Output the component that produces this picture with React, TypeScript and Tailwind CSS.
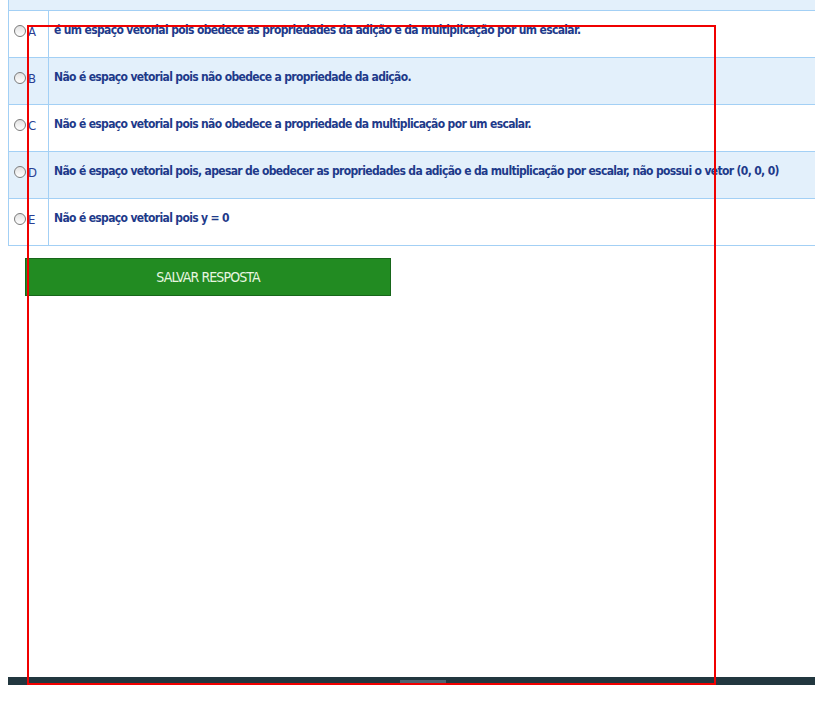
import React from 'react'

const options = [
  { letter: 'A', text: 'é um espaço vetorial pois obedece as propriedades da adição e da multiplicação por um escalar.' },
  { letter: 'B', text: 'Não é espaço vetorial pois não obedece a propriedade da adição.' },
  { letter: 'C', text: 'Não é espaço vetorial pois não obedece a propriedade da multiplicação por um escalar.' },
  { letter: 'D', text: 'Não é espaço vetorial pois, apesar de obedecer as propriedades da adição e da multiplicação por escalar, não possui o vetor (0, 0, 0)' },
  { letter: 'E', text: 'Não é espaço vetorial pois y = 0' },
]

const font = "font-['DejaVu_Sans_Condensed','DejaVu_Sans',sans-serif]"

export default function App() {
  return (
    <div className={`relative h-[710px] w-full overflow-hidden bg-white flex flex-col ${font}`}>
      <div className="ml-2 border-l border-[#a3d0f5]">
        <div className="h-[11px] bg-[#e3f0fb] border-b border-[#a3d0f5]"></div>
        {options.map((o, i) => (
          <div
            key={o.letter}
            className={`flex h-[47px] border-b border-[#a3d0f5] ${i % 2 === 1 ? 'bg-[#e3f0fb]' : 'bg-white'}`}
          >
            <div className="w-[40px] shrink-0 border-r border-[#a3d0f5] flex pl-[5px]">
              <span className="mt-[14px] w-[12px] h-[12px] rounded-full border border-[#7a7a7a] bg-gradient-to-b from-[#e2e2e2] to-white"></span>
              <span className="mt-[13px] ml-[2px] text-[13px] leading-4 tracking-[-0.5px] text-[#2a3f94]">{o.letter}</span>
            </div>
            <div className="pl-[5px] pt-[9px] text-[12px] leading-5 font-bold tracking-[-0.65px] text-[#1e3a8a] whitespace-nowrap">
              {o.text}
            </div>
          </div>
        ))}
      </div>

      <button className="mt-[12px] ml-[25px] w-[366px] h-[38px] bg-[#228b22] border border-[#17661a] text-[#e8f6e0] text-[14px] tracking-[-0.9px] uppercase">
        Salvar Resposta
      </button>

      <div className="mt-auto mb-[25px] ml-2 h-[8px] bg-[#22373f] flex pl-[392px]">
        <div className="mt-[3px] w-[46px] h-[5px] bg-[#4f6470]"></div>
      </div>

      <div className="absolute left-[27px] top-[25px] w-[689px] h-[660px] border-2 border-[#f00000] pointer-events-none"></div>
    </div>
  )
}
